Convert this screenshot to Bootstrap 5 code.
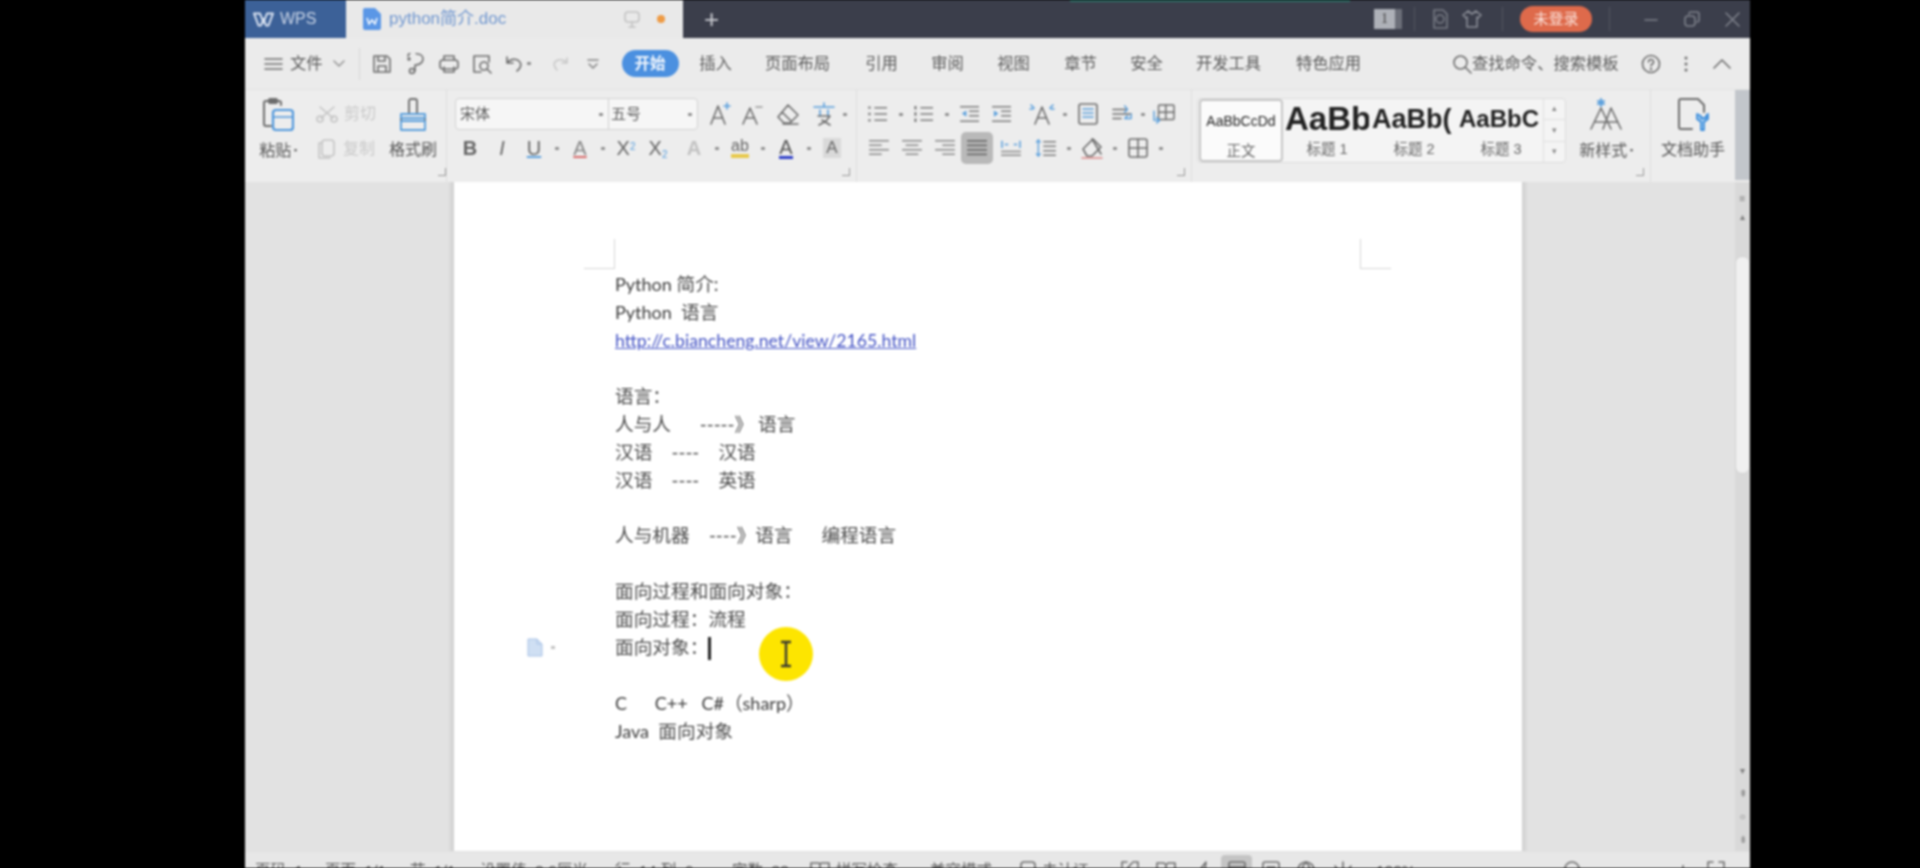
<!DOCTYPE html>
<html lang="zh-CN">
<head>
<meta charset="utf-8">
<title>python简介.doc - WPS</title>
<link href="https://cdn.jsdelivr.net/npm/bootstrap@5.3.0/dist/css/bootstrap.min.css" rel="stylesheet">
<style>
html,body{height:868px;overflow:hidden;background:#000}
body{font-family:"Liberation Sans","Noto Sans CJK SC",sans-serif;color:#5c5c5c}
.wps-win{width:1505px;height:868px;margin-left:245px;overflow:hidden;filter:blur(.9px);background:#e9e9e9}
svg{display:block;flex:none}
.ico{fill:none;stroke:#6d6d6d;stroke-width:1.6;stroke-linecap:round;stroke-linejoin:round}
.ico-faint{stroke:#c4c4c4}
.acc{stroke:#5a9fdc}
/* title bar */
.tabbar{height:38px;background:#3b3e4b;flex:none}
.green-line{height:2px;width:280px;background:#2f6d66;margin-left:351px;align-self:flex-start}
.tab-wps{width:101px;background:#3c6198;color:#c9d4e6;font-size:16px;padding-left:8px;gap:6px}
.tab-doc{width:337px;background:#e9e9e9;color:#6f96cf;font-size:17px;padding-left:17px}
.dot-o{width:8px;height:8px;border-radius:50%;background:#ee9b45;margin-left:17px}
.tab-plus{color:#c9cbd1;font-size:26px;font-weight:300;line-height:1;margin-left:21px}
.num-badge{width:28px;height:20px;background:#aeb1b8;color:#444;font-size:14px;font-family:"Liberation Serif",serif;text-align:center;line-height:20px;border-right:7px solid #6c6f79}
.vsep{width:1px;height:24px;background:#52555f}
.login-pill{width:72px;height:26px;background:#de6a4b;color:#fbe3dc;border-radius:13px;font-size:15px;text-align:center;line-height:26px}
/* menu */
.menubar{height:52px;background:#ebebeb;flex:none;font-size:16.3px;border-bottom:1px solid #e2e2e2}
.start-pill{width:57px;height:27px;background:#4b90e0;color:#f2f7fd;border-radius:14px;text-align:center;line-height:27px;font-weight:700;font-size:15.5px}
.mt{width:66px;text-align:center;white-space:nowrap;flex:none}
.mt-wide{width:98px}
/* ribbon */
.ribbon{height:92px;background:#ededed;flex:none}
.rgroup{border-right:1px solid #dfdfdf;flex:none}
.rlabel{font-size:16px;line-height:20px;white-space:nowrap;color:#575757}
.faded{color:#c9c9c9}
.launch{width:8px;height:8px;border-right:1.5px solid #999;border-bottom:1.5px solid #999;flex:none}
.tk{width:32px;height:32px;display:flex;align-items:center;justify-content:center;flex:none}
.tk33{width:33px}
.dp{width:14px;height:32px;display:flex;align-items:center;justify-content:center;flex:none}
.dp::before{content:"";width:4px;height:3px;background:#8d8d8d;border-radius:1px}
.tt{font-size:20px;line-height:1;color:#666}
.font-box{width:243px;height:32px;background:#f6f6f6;border:1px solid #d2d2d2;border-radius:4px;font-size:15px;flex:none}
.fb-a{width:153px;padding:0 4px;border-right:1px solid #cfcfcf;height:100%}
.fb-b{flex:1;padding:0 2px}
.tk-on{background:#b9b9b9;border-radius:5px;width:32px;margin-right:1px}
.gal{width:369px;height:65px;background:#f4f4f4;border:1px solid #dcdcdc;border-radius:4px;flex:none;overflow:hidden}
.gal-item{height:100%;width:84px;overflow:hidden;text-align:center;flex:none;font-family:"Liberation Sans","Noto Sans CJK SC",sans-serif;white-space:nowrap}
.gal-on{background:#fbfbfb;border:2px solid #c6c6c6;border-radius:4px;margin-left:1px}
.gal-samp{height:40px;display:flex;align-items:center;justify-content:center;color:#222;overflow:hidden}
.gal-name{font-size:14.5px;line-height:20px;color:#666}
.gal-arr{width:22px;border-left:1px solid #e0e0e0;font-size:9px;color:#888}
.gal-arr>div{flex:1;display:flex;align-items:center;justify-content:center;border-bottom:1px solid #e0e0e0}
.strip-r{width:15px;height:90px;background:#c2c6cb;flex:none}
/* document */
.docarea{flex:1 1 auto;min-height:0;background:#e2e2e2}
.gut-l{width:209px;background:linear-gradient(90deg,#e2e2e2 97%,#cfcfcf);flex:none}
.gut-r{flex:1;background:linear-gradient(90deg,#cfcfcf,#e2e2e2 3%)}
.sheet{width:1068px;background:#fff;position:relative;flex:none;padding:89px 0 0 161px;font-family:"Lato","Noto Sans CJK SC",sans-serif;font-size:18.7px;line-height:27.95px;color:#4c4c4c}
.dl{white-space:pre;height:27.95px}
.lat{font-size:18px;color:#3c3c3c}
.sheet a{color:#4453c4;text-decoration:underline;font-size:17.7px}
.crop{position:absolute;width:31px;height:30px;border:0 solid #d6d6d6}
.crop-l{left:130px;top:57px;border-right-width:1.5px;border-bottom-width:1.5px}
.crop-r{left:906px;top:57px;border-left-width:1.5px;border-bottom-width:1.5px}
.caret{position:absolute;left:254px;top:455px;width:2.5px;height:23px;background:#222}
.hilite{position:absolute;left:305px;top:445px;width:54px;height:54px;border-radius:50%;background:#fde500;display:flex;align-items:center;justify-content:center}
.para-mark{position:absolute;left:73px;top:456px;display:flex;align-items:center;gap:8px}
.para-mark i{width:4px;height:3px;background:#c2c2c2;display:block}
.vscroll{width:15px;background:#d9d9d9;flex:none;padding-top:5px}
.vthumb{height:218px;background:#f0f0f0;border:1px solid #d2d2d2;border-radius:7px;margin-top:32px;width:15px}
.vbtn{height:23px;display:flex;align-items:center;justify-content:center;font-size:10px;color:#7d7d7d;line-height:1}
/* status */
.statusbar{height:17px;background:#e7e7e7;flex:none;font-size:15.5px;overflow:hidden;color:#5a5a5a;white-space:nowrap;align-items:flex-start;border-top:1px solid #e0e0e0}
.sb-i{padding-top:9px;line-height:20px;flex:none}
.sb-on{background:#c4c4c4;border-radius:4px;width:31px;height:30px;margin-top:3px;display:flex;justify-content:center;padding-top:6px;margin-left:-8px;margin-right:-8px;flex:none}
</style>
</head>
<body>
<svg width="0" height="0" style="position:absolute">
<symbol id="i-ul" viewBox="0 0 24 20"><path d="M8 3h14M8 10h14M8 17h14" fill="none" stroke="#7c7c7c" stroke-width="1.7"/><path d="M1 3h3M1 10h3M1 17h3" fill="none" stroke="#8a8a8a" stroke-width="2.6"/></symbol>
<symbol id="i-ol" viewBox="0 0 24 20"><path d="M8 3h14M8 10h14M8 17h14" fill="none" stroke="#7c7c7c" stroke-width="1.7"/><path d="M2.500 1v4M2.500 8v4M2.500 15v4" fill="none" stroke="#666" stroke-width="2"/></symbol>
<symbol id="i-out" viewBox="0 0 24 20"><path d="M1 2h21M11 7h11M11 12h11M1 18h21" fill="none" stroke="#7c7c7c" stroke-width="1.7"/><path d="M8 6 3 9.500l5 3.500z" fill="#5a9fdc"/></symbol>
<symbol id="i-in" viewBox="0 0 24 20"><path d="M1 2h21M11 7h11M11 12h11M1 18h21" fill="none" stroke="#7c7c7c" stroke-width="1.7"/><path d="M3 6l5 3.500-5 3.500z" fill="#5a9fdc"/></symbol>
<symbol id="i-al" viewBox="0 0 24 20"><path d="M1 2h22M1 7h14M1 12h22M1 17h14" fill="none" stroke="#8a8a8a" stroke-width="1.7"/></symbol>
<symbol id="i-ac" viewBox="0 0 24 20"><path d="M1 2h22M5 7h14M1 12h22M5 17h14" fill="none" stroke="#8a8a8a" stroke-width="1.7"/></symbol>
<symbol id="i-ar" viewBox="0 0 24 20"><path d="M1 2h22M9 7h14M1 12h22M9 17h14" fill="none" stroke="#8a8a8a" stroke-width="1.7"/></symbol>
<symbol id="i-aj" viewBox="0 0 24 20"><path d="M1 2h22M1 7h22M1 12h22M1 17h22" fill="none" stroke="#6c6c6c" stroke-width="1.9"/></symbol>
<symbol id="i-ad" viewBox="0 0 24 20"><path d="M1 18h22M1 14h22" fill="none" stroke="#8a8a8a" stroke-width="1.7"/><path d="M2 2v8M22 2v8M5 6h4M15 6h4" fill="none" stroke="#5a9fdc" stroke-width="1.7"/></symbol>
<symbol id="i-ls" viewBox="0 0 24 20"><path d="M9 3h14M9 8h14M9 13h14M9 18h14" fill="none" stroke="#7c7c7c" stroke-width="1.7"/><path d="M3.500 1v18M1 4l2.500-3L6 4M1 16l2.500 3L6 16" fill="none" stroke="#5a9fdc" stroke-width="1.5"/></symbol>
</svg>
<div class="wps-win d-flex flex-column">

  <!-- title bar -->
  <div class="tabbar d-flex">
    <div class="tab-wps d-flex align-items-center">
      <svg width="21" height="15" viewBox="0 0 21 15"><path d="M1 1.500h6l3.500 9L14 1.500h6L15.500 13.500H13L10.500 7 8 13.500H5.500z" fill="none" stroke="#dbe4f2" stroke-width="2" stroke-linejoin="round"/></svg>
      <span>WPS</span>
    </div>
    <div class="tab-doc d-flex align-items-center">
      <svg width="18" height="22" viewBox="0 0 18 22" class="me-2"><path d="M2 0h10l6 6v14a2 2 0 0 1-2 2H2a2 2 0 0 1-2-2V2a2 2 0 0 1 2-2z" fill="#5b97e6"/><path d="M4 10l2 6 3-4 3 4 2-6" fill="none" stroke="#fff" stroke-width="1.500"/></svg>
      <span>python简介.doc</span>
      <svg width="16" height="17" viewBox="0 0 16 17" style="margin-left:118px" class="ico"><rect x="1" y="1" width="14" height="10" rx="3" stroke="#c2c2c2"/><path d="M8 11v4M5 16h6" stroke="#c2c2c2"/></svg>
      <span class="dot-o"></span>
    </div>
    <div class="tab-plus align-self-center">+</div>
    <div class="green-line"></div>
    <div class="d-flex align-items-center ms-auto" style="gap:0">
      <div class="num-badge">1</div>
      <div class="vsep" style="margin-left:12px"></div>
      <svg width="18" height="20" viewBox="0 0 18 20" class="ico ms-3"><path d="M3 1h9l4 4v14H3z" stroke="#777a84"/><circle cx="9" cy="10" r="4" stroke="#777a84"/></svg>
      <svg width="20" height="18" viewBox="0 0 20 18" class="ico" style="margin-left:13px"><path d="M6 1 1 5l3 3 1-1v10h10V7l1 1 3-3-5-4-4 3z" stroke="#8a8d96"/></svg>
      <div class="vsep" style="margin-left:20px"></div>
      <div class="login-pill" style="margin-left:17px">未登录</div>
      <div class="vsep" style="margin-left:17px"></div>
      <svg width="14" height="14" viewBox="0 0 14 14" class="ico" style="margin-left:34px"><path d="M1 8h12" stroke="#7d808a"/></svg>
      <svg width="16" height="16" viewBox="0 0 16 16" class="ico" style="margin-left:26px"><rect x="1" y="5" width="10" height="10" rx="3" stroke="#7d808a"/><path d="M5 3a2 2 0 0 1 2-2h6a2 2 0 0 1 2 2v6a2 2 0 0 1-2 2" stroke="#7d808a"/></svg>
      <svg width="15" height="15" viewBox="0 0 15 15" class="ico" style="margin-left:25px;margin-right:10px"><path d="M1 1l13 13M14 1 1 14" stroke="#7d808a"/></svg>
    </div>
  </div>

  <!-- menu bar -->
  <div class="menubar d-flex align-items-center">
    <svg width="19" height="12" viewBox="0 0 19 12" class="ico" style="margin-left:19px"><path d="M1 1h17M1 6h17M1 11h17"/></svg>
    <span style="margin-left:7px">文件</span>
    <svg width="12" height="7" viewBox="0 0 12 7" class="ico ico-faint" style="margin-left:10px"><path d="M1 1l5 5 5-5" stroke="#999"/></svg>
    <div style="width:1px;height:32px;background:#d6d6d6;margin-left:14px"></div>
    <svg width="20" height="20" viewBox="0 0 20 20" class="ico" style="margin-left:12px"><path d="M2 2h13l3 3v13H2zM6 2v5h7V2M6 18v-6h8v6"/></svg>
    <svg width="20" height="22" viewBox="0 0 20 22" class="ico" style="margin-left:13px"><path d="M3 3a5 5 0 0 1 9-2c2 0 6 1 6 5s-4 6-8 6v6"/><circle cx="7" cy="18" r="2.500"/><circle cx="4" cy="6" r="1"/></svg>
    <svg width="20" height="20" viewBox="0 0 20 20" class="ico" style="margin-left:14px"><rect x="1" y="6" width="18" height="9" rx="3"/><path d="M5 6V2h10v4M5 13v5h10v-5"/></svg>
    <svg width="20" height="20" viewBox="0 0 20 20" class="ico" style="margin-left:13px"><path d="M17 8V2H2v16h7"/><circle cx="12" cy="12" r="4"/><path d="M15 15l4 4"/></svg>
    <svg width="18" height="16" viewBox="0 0 18 16" class="ico" style="margin-left:13px"><path d="M2 1v6h6M2 7c3-4 9-5 12-2s2 7-2 10"/></svg>
    <span class="dp" style="width:8px;margin-left:2px"></span>
    <svg width="16" height="14" viewBox="0 0 16 14" class="ico ico-faint" style="margin-left:20px"><path d="M14 1v5H9M14 6C11 2 6 2 3 4s-2 6 1 9" stroke="#c9c9c9"/></svg>
    <svg width="12" height="12" viewBox="0 0 12 12" class="ico" style="margin-left:18px"><path d="M1 2h10M2 6l4 4 4-4" stroke="#888"/></svg>
    <div class="start-pill" style="margin-left:23px">开始</div>
    <div class="mt" style="margin-left:4px">插入</div>
    <div class="mt mt-wide">页面布局</div>
    <div class="mt" style="margin-left:2px">引用</div>
    <div class="mt">审阅</div>
    <div class="mt">视图</div>
    <div class="mt" style="margin-left:1px">章节</div>
    <div class="mt">安全</div>
    <div class="mt mt-wide">开发工具</div>
    <div class="mt mt-wide" style="margin-left:2px">特色应用</div>
    <svg width="20" height="20" viewBox="0 0 20 20" class="ico ms-auto"><circle cx="8.500" cy="8.500" r="6.500"/><path d="M13.500 13.500 19 19"/></svg>
    <span style="width:150px;white-space:nowrap">查找命令、搜索模板</span>
    <svg width="20" height="20" viewBox="0 0 20 20" class="ico" style="margin-left:19px"><circle cx="10" cy="10" r="8.500"/><path d="M7.500 8a2.500 2.500 0 1 1 3.500 2.300c-.8.400-1 1-1 1.700"/><circle cx="10" cy="15" r=".5"/></svg>
    <svg width="4" height="16" viewBox="0 0 4 16" style="margin-left:23px"><circle cx="2" cy="2" r="1.500" fill="#6d6d6d"/><circle cx="2" cy="8" r="1.500" fill="#6d6d6d"/><circle cx="2" cy="14" r="1.500" fill="#6d6d6d"/></svg>
    <svg width="18" height="10" viewBox="0 0 18 10" class="ico" style="margin-left:25px;margin-right:19px"><path d="M1 9l8-8 8 8"/></svg>
  </div>

  <!-- ribbon -->
  <div class="ribbon d-flex">
    <!-- clipboard -->
    <div class="rgroup d-flex" style="width:202px">
      <div class="d-flex flex-column align-items-center" style="width:46px;margin-left:10px;padding-top:8px">
        <svg width="32" height="34" viewBox="0 0 32 34" class="ico"><path d="M19 7V5a2 2 0 0 0-2-2H4a2 2 0 0 0-2 2v21a2 2 0 0 0 2 2h5" stroke-width="2"/><rect x="7" y="1" width="8" height="4" rx="1" stroke-width="2"/><rect x="11" y="12" width="20" height="20" rx="3" stroke="#4f97dc" stroke-width="2.200"/><path d="M11 19h20" stroke="#4f97dc" stroke-width="1.600"/></svg>
        <div class="rlabel" style="margin-top:8px">粘贴<span style="font-size:9px;vertical-align:3px"> ▪</span></div>
      </div>
      <div class="d-flex flex-column" style="width:70px;margin-left:15px">
        <div class="d-flex align-items-center" style="height:30px;margin-top:9px;gap:6px">
          <svg width="22" height="18" viewBox="0 0 22 18" class="ico ico-faint"><path d="M4 2l13 11M18 2 5 13"/><circle cx="4" cy="14" r="3"/><circle cx="18" cy="14" r="3"/></svg>
          <span class="rlabel faded">剪切</span>
        </div>
        <div class="d-flex align-items-center" style="height:30px;margin-top:5px;gap:7px">
          <svg width="20" height="20" viewBox="0 0 20 20" class="ico ico-faint"><rect x="6" y="1" width="12" height="16" rx="3"/><path d="M6 4H3v15h11"/></svg>
          <span class="rlabel faded">复制</span>
        </div>
      </div>
      <div class="d-flex flex-column align-items-center" style="width:50px;margin-left:2px;padding-top:8px">
        <svg width="30" height="34" viewBox="0 0 30 34" class="ico"><path d="M11 16V3a2 2 0 0 1 2-2h4a2 2 0 0 1 2 2v13" stroke-width="1.900"/><path d="M3 20h24v3H3z" stroke-width="1.900"/><path d="M3 16h24v4H3zM3 23h24v9H3z" stroke="#5a9fdc" stroke-width="1.900"/></svg>
        <div class="rlabel" style="margin-top:8px">格式刷</div>
      </div>
      <div class="launch align-self-end" style="margin:0 0 6px 0"></div>
    </div>
    <!-- font -->
    <div class="rgroup d-flex flex-column" style="width:410px;position:relative">
      <div class="d-flex align-items-center" style="height:32px;margin-top:8px;padding-left:8px">
        <div class="font-box d-flex align-items-center">
          <div class="fb-a d-flex align-items-center justify-content-between"><span>宋体</span><span class="dp" style="width:6px"></span></div>
          <div class="fb-b d-flex align-items-center justify-content-between"><span>五号</span><span class="dp" style="width:10px"></span></div>
        </div>
        <div class="tk" style="margin-left:6px"><svg width="24" height="24" viewBox="0 0 24 24" class="ico"><path d="M3 22 10 4l7 18M5.500 16h9"/><path d="M19 1v6M16 4h6" stroke="#5a9fdc"/></svg></div>
        <div class="tk"><svg width="22" height="22" viewBox="0 0 22 22" class="ico"><path d="M2 21 9 5l7 16M4.500 15h9"/><path d="M15 4h6" stroke="#999"/></svg></div>
        <div class="tk ms-1"><svg width="24" height="22" viewBox="0 0 24 22" class="ico"><path d="M12 2 22 12l-8 8H8l-6-6zM6 9l9 9M7 21h15"/></svg></div>
        <div class="tk ms-1"><svg width="24" height="24" viewBox="0 0 24 24" class="ico"><path d="M2 5h20M12 1v4M8 8v6M16 8v6" stroke="#5a9fdc"/><path d="M6 14h12l-4 5-7 4M10 18l8 5"/></svg></div>
        <span class="dp" style="width:10px"></span>
      </div>
      <div class="d-flex align-items-center" style="height:32px;margin-top:2px;padding-left:7px">
        <div class="tk"><span class="tt fw-bold" style="font-weight:500">B</span></div>
        <div class="tk"><span class="tt fst-italic">I</span></div>
        <div class="tk"><span class="tt text-decoration-underline" style="text-decoration-color:#5a9fdc!important">U</span></div>
        <span class="dp"></span>
        <div class="tk"><span class="tt text-decoration-underline" style="color:#888;text-decoration-color:#d86a6a!important">A</span></div>
        <span class="dp"></span>
        <div class="tk"><span class="tt">X<sup style="font-size:10px;color:#5a9fdc">2</sup></span></div>
        <div class="tk"><span class="tt">X<sub style="font-size:10px;color:#5a9fdc">2</sub></span></div>
        <div class="tk ms-1"><span class="tt" style="color:#c2c2c2;font-weight:700">A</span></div>
        <span class="dp"></span>
        <div class="tk"><span class="tt d-block" style="font-size:16px;color:#666;border-bottom:4px solid #e8c94a;line-height:16px">ab</span></div>
        <span class="dp"></span>
        <div class="tk"><span class="tt d-block" style="border-bottom:3px solid #3040c8;line-height:18px;color:#555">A</span></div>
        <span class="dp"></span>
        <div class="tk"><span class="tt d-block" style="background:#d9d9d9;padding:0 3px;font-size:17px;line-height:20px">A</span></div>
      </div>
      <div class="launch" style="position:absolute;right:6px;bottom:6px"></div>
    </div>
    <!-- paragraph -->
    <div class="rgroup d-flex flex-column" style="width:335px;position:relative">
      <div class="d-flex align-items-center" style="height:32px;margin-top:8px;padding-left:5px">
        <div class="tk"><svg width="22" height="18"><use href="#i-ul"/></svg></div><span class="dp"></span>
        <div class="tk"><svg width="22" height="18"><use href="#i-ol"/></svg></div><span class="dp"></span>
        <div class="tk"><svg width="22" height="18"><use href="#i-out"/></svg></div>
        <div class="tk"><svg width="22" height="18"><use href="#i-in"/></svg></div>
        <div class="tk ms-2"><svg width="26" height="24" viewBox="0 0 26 24" class="ico"><path d="M6 22 13 5l7 17M8.500 16h9"/><path d="M2 3l3 3M1 7h3M21 6l3-3M22 7h3" stroke="#5a9fdc"/></svg></div><span class="dp"></span>
        <div class="tk"><svg width="20" height="22" viewBox="0 0 20 22" class="ico"><rect x="1" y="1" width="18" height="20" rx="2"/><path d="M5 6h10M5 10h10M5 14h10" stroke="#5a9fdc"/></svg></div>
        <div class="tk" style="margin-left:2px"><svg width="20" height="20" viewBox="0 0 22 20" class="ico"><path d="M1 5h15M1 10h20M1 15h9"/><path d="M14 1l3 4-3 3M21 10v5h-7l3-3" stroke="#5a9fdc"/></svg></div><span class="dp" style="width:10px"></span>
        <div class="tk"><svg width="22" height="20" viewBox="0 0 24 22" class="ico"><rect x="6" y="1" width="17" height="16" rx="1"/><path d="M14 1v16M6 9h17"/><path d="M1 8v10h6M4 15l3 3-3 3" stroke="#5a9fdc"/></svg></div>
      </div>
      <div class="d-flex align-items-center" style="height:32px;margin-top:2px;padding-left:5px">
        <div class="tk tk33"><svg width="22" height="18"><use href="#i-al"/></svg></div>
        <div class="tk tk33"><svg width="22" height="18"><use href="#i-ac"/></svg></div>
        <div class="tk tk33"><svg width="22" height="18"><use href="#i-ar"/></svg></div>
        <div class="tk tk-on"><svg width="22" height="18"><use href="#i-aj"/></svg></div>
        <div class="tk tk33"><svg width="22" height="18"><use href="#i-ad"/></svg></div>
        <div class="tk" style="margin-left:3px"><svg width="22" height="18"><use href="#i-ls"/></svg></div><span class="dp"></span>
        <div class="tk ms-0"><svg width="24" height="24" viewBox="0 0 24 24" class="ico"><path d="M3 13 13 3l8 8-9 9H7z"/><path d="M12 3l9 15"/><path d="M2 22h20" stroke="#d88"/></svg></div><span class="dp"></span>
        <div class="tk"><svg width="20" height="20" viewBox="0 0 20 20" class="ico"><rect x="1" y="1" width="18" height="18" rx="2"/><path d="M10 1v18M1 10h18"/></svg></div><span class="dp"></span>
      </div>
      <div class="launch" style="position:absolute;right:6px;bottom:6px"></div>
    </div>
    <!-- styles -->
    <div class="rgroup d-flex" style="width:459px;position:relative">
      <div class="gal d-flex" style="margin:8px 0 0 5px">
        <div class="gal-item gal-on">
          <div class="gal-samp" style="font-size:14px">AaBbCcDd</div>
          <div class="gal-name">正文</div>
        </div>
        <div class="gal-item" style="margin-left:2px">
          <div class="gal-samp justify-content-start" style="font-size:33px;font-weight:700">AaBb</div>
          <div class="gal-name">标题 1</div>
        </div>
        <div class="gal-item" style="margin-left:3px">
          <div class="gal-samp justify-content-start" style="font-size:27px;font-weight:700">AaBb(</div>
          <div class="gal-name">标题 2</div>
        </div>
        <div class="gal-item" style="margin-left:3px">
          <div class="gal-samp justify-content-start" style="font-size:24px;font-weight:700">AaBbC</div>
          <div class="gal-name">标题 3</div>
        </div>
        <div class="gal-arr d-flex flex-column flex-grow-1">
          <div>▴</div><div>▾</div><div style="border:0">▾</div>
        </div>
      </div>
      <div class="d-flex flex-column align-items-center" style="width:62px;margin-left:9px;padding-top:8px">
        <svg width="34" height="34" viewBox="0 0 34 34" class="ico"><path d="M2 31 12 10l10 21M6 24h12M14 31l8-21 10 21M17 24h12"/><path d="M12 1v7M9 3l6 3M15 3 9 6" stroke="#5a9fdc" stroke-width="2"/></svg>
        <div class="rlabel" style="margin-top:8px">新样式<span style="font-size:9px;vertical-align:3px"> ▪</span></div>
      </div>
      <div class="launch" style="position:absolute;right:6px;bottom:6px"></div>
    </div>
    <!-- assistant -->
    <div class="d-flex flex-column align-items-center" style="width:84px;padding-top:8px;flex:none">
      <svg width="34" height="34" viewBox="0 0 34 34" class="ico"><path d="M16 31H5a2 2 0 0 1-2-2V3a2 2 0 0 1 2-2h17l6 6v7" stroke-width="2"/><path d="M21 16v5l4 3v8h3v-8l4-3v-5l-2 2v2h-5v-2z" fill="#9cc8ee" stroke="#3f8fdc" stroke-width="1.800"/></svg>
      <div class="rlabel" style="margin-top:8px">文档助手</div>
    </div>
    <div class="strip-r"></div>
  </div>

  <!-- document -->
  <div class="docarea d-flex">
    <div class="gut-l"></div>
    <div class="sheet">
      <div class="crop crop-l"></div>
      <div class="crop crop-r"></div>
      <div class="dl"><span class="lat">Python </span>简介:</div>
      <div class="dl"><span class="lat">Python  </span>语言</div>
      <div class="dl"><a href="#">http://c.biancheng.net/view/2165.html</a></div>
      <div class="dl"></div>
      <div class="dl">语言：</div>
      <div class="dl">人与人      -----》 语言</div>
      <div class="dl">汉语    ----    汉语</div>
      <div class="dl">汉语    ----    英语</div>
      <div class="dl"></div>
      <div class="dl">人与机器    ----》语言      编程语言</div>
      <div class="dl"></div>
      <div class="dl">面向过程和面向对象：</div>
      <div class="dl">面向过程：流程</div>
      <div class="dl">面向对象：</div>
      <div class="dl"></div>
      <div class="dl"><span class="lat">C      C++   C#</span>（<span class="lat">sharp</span>）</div>
      <div class="dl"><span class="lat">Java  </span>面向对象</div>
      <div class="caret"></div>
      <div class="para-mark">
        <svg width="16" height="19" viewBox="0 0 16 19"><path d="M1 1h9l5 5v12H1z" fill="#cfdff3" stroke="#a9c3e6"/><path d="M10 1v5h5" fill="none" stroke="#a9c3e6"/></svg><i></i>
      </div>
      <div class="hilite"><svg width="16" height="28" viewBox="0 0 16 28" fill="none" stroke="#3a3a30" stroke-width="2.400"><path d="M3 2h10M3 26h10M8 2v24"/></svg></div>
    </div>
    <div class="gut-r"></div>
    <div class="vscroll d-flex flex-column">
      <div class="vbtn">≡</div>
      <div class="vbtn" style="height:14px">▴</div>
      <div class="vthumb"></div>
      <div class="flex-grow-1"></div>
      <div class="vbtn">▾</div>
      <div class="vbtn">⇞</div>
      <div class="vbtn">○</div>
      <div class="vbtn">⇟</div>
    </div>
  </div>

  <!-- status bar -->
  <div class="statusbar d-flex">
    <span class="sb-i" style="margin-left:10px;width:70px">页码: 1</span>
    <span class="sb-i" style="width:85px">页面: 1/1</span>
    <span class="sb-i" style="width:70px">节: 1/1</span>
    <span class="sb-i" style="width:135px">设置值: 2.6厘米</span>
    <span class="sb-i" style="width:117px">行: 14  列: 6</span>
    <span class="sb-i" style="width:78px">字数: 33</span>
    <span class="sb-i d-flex" style="width:120px;gap:6px"><svg width="20" height="16" viewBox="0 0 20 16" class="ico"><path d="M1 2h7a2 2 0 0 1 2 2 2 2 0 0 1 2-2h7v13h-7l-2 1-2-1H1zM10 4v10"/></svg>拼写检查</span>
    <span class="sb-i" style="width:90px">兼容模式</span>
    <span class="sb-i d-flex" style="width:101px;gap:6px"><svg width="16" height="16" viewBox="0 0 16 16" class="ico"><rect x="1" y="1" width="14" height="14" rx="3"/></svg>未认证</span>
    <span class="sb-i" style="width:35px"><svg width="18" height="16" viewBox="0 0 18 16" class="ico"><path d="M1 6V1h5M17 6V1h-5M5 9l6-7"/></svg></span>
    <span class="sb-i" style="width:36px"><svg width="20" height="16" viewBox="0 0 20 16" class="ico"><path d="M1 2h7l2 2 2-2h7v13H1zM10 4v11"/></svg></span>
    <span class="sb-i" style="width:37px"><svg width="16" height="16" viewBox="0 0 16 16" class="ico"><path d="M2 16 14 1l-2 15"/></svg></span>
    <span class="sb-on"><svg width="18" height="18" viewBox="0 0 18 18" class="ico"><rect x="1" y="1" width="16" height="16" rx="2"/><path d="M1 6h16"/></svg></span>
    <span class="sb-i" style="width:35px;margin-left:18px"><svg width="18" height="16" viewBox="0 0 18 16" class="ico"><rect x="1" y="1" width="16" height="14" rx="2"/><path d="M5 6h8"/></svg></span>
    <span class="sb-i" style="width:35px"><svg width="18" height="18" viewBox="0 0 18 18" class="ico"><circle cx="9" cy="9" r="8"/><path d="M1 9h16M9 1c-5 5-5 11 0 16M9 1c5 5 5 11 0 16"/></svg></span>
    <span class="sb-i" style="width:44px"><svg width="22" height="16" viewBox="0 0 22 16" class="ico"><path d="M11 1v14M3 5l4 5M19 5l-4 5"/></svg></span>
    <span class="sb-i" style="width:60px">100%</span>
    <span class="sb-i" style="width:135px;padding-left:128px"><svg width="16" height="16" viewBox="0 0 16 16" class="ico"><circle cx="8" cy="8" r="7"/></svg></span>
    <span class="sb-i" style="width:118px;padding-left:110px">|</span>
    <span class="sb-i" style="width:20px;margin-left:18px"><svg width="18" height="16" viewBox="0 0 18 16" class="ico"><path d="M1 6V1h5M17 6V1h-5"/></svg></span>
  </div>
</div>
<script src="https://cdn.jsdelivr.net/npm/bootstrap@5.3.0/dist/js/bootstrap.bundle.min.js"></script>
</body>
</html>
